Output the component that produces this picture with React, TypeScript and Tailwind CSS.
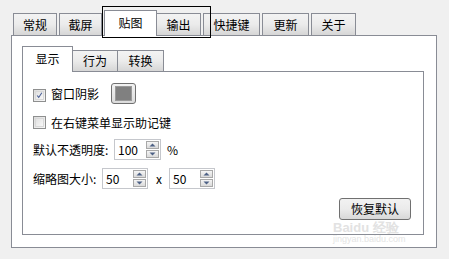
import React from "react";

const font = { fontFamily: '"Noto Sans CJK SC", "Microsoft YaHei", sans-serif' };

function OuterTab({ label, w, ml, selected }: { label: string; w: string; ml: string; selected?: boolean }) {
  if (selected) {
    return (
      <div
        className={`${w} ${ml} h-[26px] -mb-[1px] relative z-10 flex items-center justify-center bg-white border border-b-0 border-[#898c95] text-black text-[12px] leading-none pb-[2px]`}
      >
        {label}
      </div>
    );
  }
  return (
    <div
      className={`${w} ${ml} h-[22px] flex items-center justify-center border border-b-0 border-[#898c95] bg-gradient-to-b from-[#f3f3f3] via-[#ebebeb] to-[#d6d6d6] text-black text-[12px] leading-none`}
    >
      {label}
    </div>
  );
}

function InnerTab({ label, w, selected }: { label: string; w: string; selected?: boolean }) {
  if (selected) {
    return (
      <div
        className={`${w} h-[26px] -mb-[1px] relative z-10 flex items-center justify-center bg-white border border-b-0 border-[#898c95] text-black text-[12px] leading-none pb-[2px]`}
      >
        {label}
      </div>
    );
  }
  return (
    <div
      className={`${w} h-[21px] flex items-center justify-center border border-b-0 border-l-0 border-[#898c95] bg-gradient-to-b from-[#f3f3f3] via-[#ebebeb] to-[#d6d6d6] text-black text-[12px] leading-none`}
    >
      {label}
    </div>
  );
}

function Checkbox({ checked }: { checked?: boolean }) {
  return (
    <div className="w-[13px] h-[13px] border border-[#8e8f8f] bg-gradient-to-br from-[#dcdcdc] to-[#f8f8f8] flex items-center justify-center">
      <div className="w-[9px] h-[9px] border border-[#d8d8d8] bg-gradient-to-br from-[#e2e2e2] to-[#f7f7f7] flex items-center justify-center">
        {checked && (
          <svg width="9" height="9" viewBox="0 0 9 9">
            <path d="M1.5 4.5 L3.5 7 L7.5 1" stroke="#4a5f97" strokeWidth="1.4" fill="none" />
          </svg>
        )}
      </div>
    </div>
  );
}

function Spin({ value, w }: { value: string; w: string }) {
  return (
    <div className={`${w} h-[21px] border border-[#c5c7cc] bg-white flex items-center pl-[3px] pr-[1px]`}>
      <span className="flex-1 text-[12px] text-black leading-none pt-[1px]">{value}</span>
      <div className="w-[13px] h-[17px] flex flex-col gap-[1px]">
        <div className="h-[8px] border border-[#a8a8a8] bg-gradient-to-b from-[#f5f5f5] to-[#dadada] flex items-center justify-center">
          <svg width="7" height="4" viewBox="0 0 7 4">
            <path d="M0.5 3.5 L3.5 0.5 L6.5 3.5 Z" fill="#4d6185" />
          </svg>
        </div>
        <div className="h-[8px] border border-[#a8a8a8] bg-gradient-to-b from-[#f5f5f5] to-[#dadada] flex items-center justify-center">
          <svg width="7" height="4" viewBox="0 0 7 4">
            <path d="M0.5 0.5 L3.5 3.5 L6.5 0.5 Z" fill="#4d6185" />
          </svg>
        </div>
      </div>
    </div>
  );
}

export default function App() {
  return (
    <div className="w-[449px] h-[259px] bg-[#f0f0f0] relative overflow-hidden" style={font}>
      <div className="pt-[10px] px-[11px]">
        {/* outer tabs */}
        <div className="flex items-end h-[25px]">
          <OuterTab label="常规" w="w-[44px]" ml="ml-[2px]" />
          <OuterTab label="截屏" w="w-[43px]" ml="ml-[2px]" />
          <OuterTab label="贴图" w="w-[53px]" ml="ml-[2px]" selected />
          <OuterTab label="输出" w="w-[45px]" ml="-ml-[1px]" />
          <OuterTab label="快捷键" w="w-[57px]" ml="ml-[2px]" />
          <OuterTab label="更新" w="w-[47px]" ml="ml-[2px]" />
          <OuterTab label="关于" w="w-[45px]" ml="ml-[2px]" />
        </div>
        {/* panel */}
        <div className="w-[426px] h-[213px] border border-[#898c95] bg-white pt-[10px] pl-[10px] pr-[12px]">
          <div className="flex items-end h-[25px]">
            <InnerTab label="显示" w="w-[51px]" selected />
            <InnerTab label="行为" w="w-[45px]" />
            <InnerTab label="转换" w="w-[46px]" />
          </div>
          <div className="h-[164px] border border-[#898c95] bg-white pl-[10px] pr-[12px] pt-[11px] flex flex-col text-[12px] text-black">
            <div className="flex items-center h-[21px]">
              <div className="mt-[3px]">
                <Checkbox checked />
              </div>
              <span className="ml-[5px] leading-none mt-[1px]">窗口阴影</span>
              <div className="ml-[12px] w-[25px] h-[21px] rounded-[3px] border border-[#707070] bg-gradient-to-b from-[#f2f2f2] to-[#dcdcdc] flex items-center justify-center">
                <div className="w-[17px] h-[15px] bg-[#808080] border border-[#9a9a9a]" />
              </div>
            </div>
            <div className="flex items-center h-[13px] mt-[12px]">
              <Checkbox />
              <span className="ml-[5px] leading-none">在右键菜单显示助记键</span>
            </div>
            <div className="flex items-center h-[21px] mt-[10px]">
              <span className="leading-none w-[81px]">默认不透明度:</span>
              <Spin value="100" w="w-[47px]" />
              <span className="ml-[6px] leading-none">%</span>
            </div>
            <div className="flex items-center h-[21px] mt-[8px]">
              <span className="leading-none w-[69px]">缩略图大小:</span>
              <Spin value="50" w="w-[46px]" />
              <span className="ml-[8px] mr-[7px] leading-none">x</span>
              <Spin value="50" w="w-[46px]" />
            </div>
            <div className="flex justify-end mt-[9px]">
              <div className="w-[72px] h-[22px] rounded-[3px] border border-[#707070] bg-gradient-to-b from-[#f2f2f2] via-[#ebebeb] to-[#d8d8d8] flex items-center justify-center leading-none">
                恢复默认
              </div>
            </div>
          </div>
        </div>
      </div>
      {/* annotation rectangle */}
      <div className="absolute left-[102px] top-[6px] w-[109px] h-[32px] border border-black pointer-events-none z-20" />
      {/* watermark */}
      <div className="absolute left-[333px] top-[221px] text-[#e2e2e2] text-[13px] font-bold leading-none z-20" style={{ fontFamily: '"Liberation Sans", sans-serif' }}>
        Baidu 经验
      </div>
      <div className="absolute left-[333px] top-[235px] text-[#e4e4e4] text-[9px] leading-none z-20" style={{ fontFamily: '"Liberation Sans", sans-serif' }}>
        jingyan.baidu.com
      </div>
    </div>
  );
}
